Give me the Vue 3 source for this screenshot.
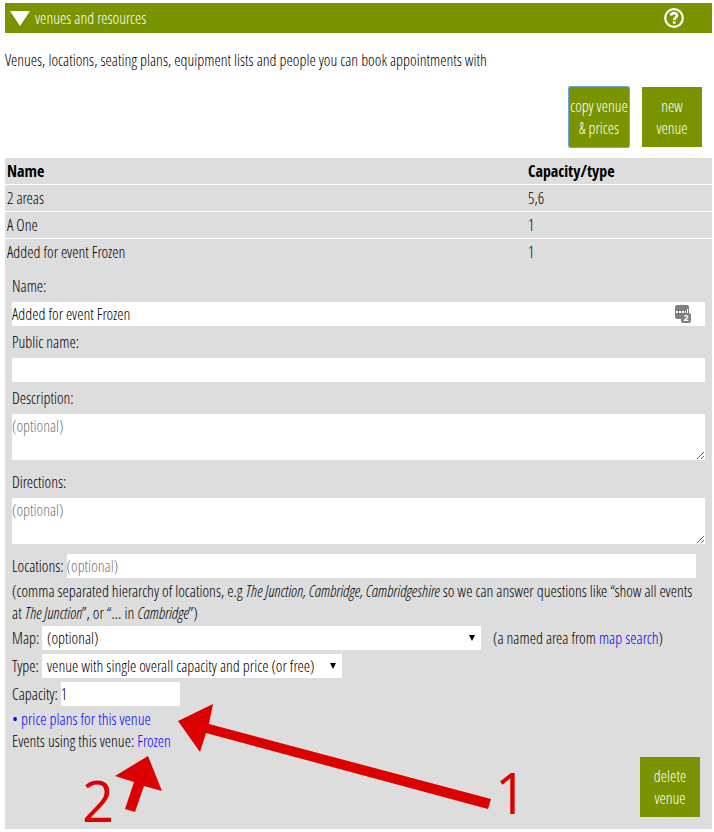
<template>
  <main class="page">
    <header class="bar">
      <button type="button" class="bar-toggle" @click="open = !open">
        <svg class="bar-arrow" viewBox="0 0 20 15"><path d="M0 0H20L10 15Z" fill="currentColor" /></svg>
        <span>venues and resources</span>
      </button>
      <button type="button" class="bar-help" aria-label="Help">
        <svg viewBox="0 0 20 20" fill="none" stroke="currentColor">
          <circle cx="10" cy="10" r="8.8" stroke-width="2.2" />
          <path d="M6.9 7.6C7.2 5.9 8.4 5.1 10 5.1C11.8 5.1 13 6.1 13 7.5C13 9.4 10.2 9.5 10.2 11.9" stroke-width="2.6" />
          <path d="M10.2 13.2V15.7" stroke-width="2.6" />
        </svg>
      </button>
    </header>

    <p class="intro">Venues, locations, seating plans, equipment lists and people you can book appointments with</p>

    <div class="actions">
      <button type="button" class="tile tile-focus">copy venue &amp; prices</button>
      <button type="button" class="tile">new<br />venue</button>
    </div>

    <section v-show="open" class="panel">
      <table class="venues">
        <thead>
          <tr>
            <th>Name</th>
            <th class="col-capacity">Capacity/type</th>
          </tr>
        </thead>
        <tbody>
          <tr v-for="venue in venues" :key="venue.name">
            <td>{{ venue.name }}</td>
            <td>{{ venue.capacity }}</td>
          </tr>
        </tbody>
      </table>

      <form class="form" @submit.prevent>
        <label class="label" for="name">Name:</label>
        <div class="with-icon">
          <input id="name" v-model="form.name" type="text" class="field" />
          <svg class="key-icon" viewBox="0 0 16 18">
            <rect x="0" y="0" width="14" height="14" rx="2" fill="#808080" />
            <rect x="6" y="8" width="10" height="10" rx="2" fill="#808080" />
            <path d="M1 6h2v2H1zM4 6h2v2H4zM7 6h2v2H7zM10 6h1v2h-1zM12 4h1v4h-1z" fill="#fff" />
            <text x="11" y="16" class="key-count">2</text>
          </svg>
        </div>

        <label class="label" for="public-name">Public name:</label>
        <input id="public-name" v-model="form.publicName" type="text" class="field" />

        <label class="label" for="description">Description:</label>
        <textarea id="description" v-model="form.description" class="field area" placeholder="(optional)"></textarea>

        <label class="label" for="directions">Directions:</label>
        <textarea id="directions" v-model="form.directions" class="field area" placeholder="(optional)"></textarea>

        <div class="line line-locations">
          <label for="locations">Locations:</label>
          <input id="locations" v-model="form.locations" type="text" class="field" placeholder="(optional)" />
        </div>
        <p class="hint">
          (comma separated hierarchy of locations, e.g <i>The Junction, Cambridge, Cambridgeshire</i> so we can answer
          questions like “show all events at <i>The Junction</i>”, or “... in <i>Cambridge</i>”)
        </p>

        <div class="line">
          <label class="label-short" for="map">Map:</label>
          <span class="select select-map">
            <select id="map" v-model="form.map" class="field">
              <option value="">(optional)</option>
            </select>
            <svg class="select-arrow" viewBox="0 0 6 6"><path d="M0 0H6L3 6Z" /></svg>
          </span>
          <span class="map-note">(a named area from <a href="#map-search">map search</a>)</span>
        </div>

        <div class="line">
          <label class="label-short" for="type">Type:</label>
          <span class="select select-type">
            <select id="type" v-model="form.type" class="field">
              <option value="single">venue with single overall capacity and price (or free)</option>
            </select>
            <svg class="select-arrow" viewBox="0 0 6 6"><path d="M0 0H6L3 6Z" /></svg>
          </span>
        </div>

        <div class="line line-capacity">
          <label for="capacity">Capacity:</label>
          <input id="capacity" v-model="form.capacity" type="text" class="field field-capacity" />
        </div>

        <div><a href="#price-plans">• price plans for this venue</a></div>
        <div>Events using this venue: <a href="#frozen">Frozen</a></div>

        <div class="form-footer">
          <button type="button" class="tile">delete venue</button>
        </div>

        <svg class="callouts" width="530" height="130" viewBox="0 0 530 130">
          <path d="M173 22L208 5L204 25L486 100L483 110L201 34L195 53Z" />
          <path d="M143 57L157 92L139 87L130 113L120 110L129 83L110 77Z" />
          <text x="77" y="123">2</text>
          <text x="490" y="115">1</text>
        </svg>
      </form>
    </section>
  </main>
</template>

<script setup>
import { reactive, ref } from 'vue'

const open = ref(true)

const venues = [
  { name: '2 areas', capacity: '5,6' },
  { name: 'A One', capacity: '1' },
  { name: 'Added for event Frozen', capacity: '1' }
]

const form = reactive({
  name: 'Added for event Frozen',
  publicName: '',
  description: '',
  directions: '',
  locations: '',
  map: '',
  type: 'single',
  capacity: '1'
})
</script>

<style>
body {
  margin: 0;
  background: #fff;
}
</style>

<style scoped>
.page {
  padding: 3px 2px 3px 5px;
  font-family: "Open Sans Condensed Light", "Liberation Sans Narrow", "Open Sans", sans-serif;
  font-size: 16px;
  font-weight: 300;
  line-height: 22px;
  color: #000;
}

button,
input,
select,
textarea {
  font: inherit;
  color: inherit;
}

a {
  color: #0000ff;
  text-decoration: none;
}

.bar {
  display: flex;
  align-items: center;
  justify-content: space-between;
  height: 30px;
  padding: 0 28px 0 5px;
  background: #7a9400;
  color: #fff;
}

.bar-toggle,
.bar-help {
  display: flex;
  align-items: center;
  gap: 5px;
  padding: 0;
  border: 0;
  background: none;
  color: #fff;
  cursor: pointer;
}

.bar-arrow {
  width: 20px;
  height: 15px;
}

.bar-help svg {
  width: 20px;
  height: 20px;
}

.intro {
  margin: 16px 0;
}

.actions {
  display: flex;
  justify-content: flex-end;
  gap: 13px;
  padding: 0 10px 11px 0;
}

.tile {
  width: 60px;
  height: 60px;
  padding: 0;
  border: 0;
  background: #7a9400;
  color: #fff;
  cursor: pointer;
}

.tile-focus {
  outline: 1px solid #6ea2e8;
  border-radius: 1px;
}

.panel {
  background: #ddd;
}

.venues {
  width: 100%;
  border-collapse: collapse;
}

.venues th,
.venues td {
  padding: 2px;
  text-align: left;
}

.venues th {
  font-family: "Open Sans Condensed", "Liberation Sans Narrow", sans-serif;
  font-weight: 700;
}

.venues tr {
  border-bottom: 1px solid #fff;
}

.venues tbody tr:last-child {
  border-bottom: 0;
}

.col-capacity {
  width: 182px;
}

.form {
  position: relative;
  padding: 5px 7px 12px;
}

.label {
  display: block;
  padding: 5px 0;
}

.field {
  display: block;
  box-sizing: border-box;
  width: 100%;
  height: 24px;
  margin: 0;
  padding: 0;
  border: 0;
  border-radius: 0;
  background: #fff;
}

.field::placeholder {
  color: #757575;
}

.area {
  height: 46px;
  margin-bottom: 6px;
  padding: 1px 0;
  resize: vertical;
}

.with-icon {
  position: relative;
}

.key-icon {
  position: absolute;
  top: 3px;
  right: 14px;
  width: 16px;
  height: 18px;
}

.key-count {
  font: 700 9px "Open Sans", sans-serif;
  fill: #fff;
  text-anchor: middle;
}

.line {
  display: flex;
  align-items: center;
  gap: 4px;
  margin-bottom: 4px;
}

.line-locations {
  gap: 3px;
  margin: 10px 9px 2px 0;
}

.line-locations .field {
  flex: 1;
}

.line-capacity {
  gap: 3px;
  margin-bottom: 2px;
}

.hint {
  margin: 0 9px 2px 0;
}

.label-short {
  width: 26px;
}

.select {
  position: relative;
}

.select select {
  padding: 0 20px 0 5px;
  appearance: none;
}

.select-map {
  flex: 0 1 439px;
}

.select-type {
  flex: 0 1 300px;
}

.select-arrow {
  position: absolute;
  top: 9px;
  right: 6px;
  width: 6px;
  height: 6px;
  pointer-events: none;
}

.map-note {
  margin-left: 8px;
}

.field-capacity {
  width: 119px;
}

.form-footer {
  display: flex;
  justify-content: flex-end;
  padding: 5px 5px 0 0;
}

.callouts {
  position: absolute;
  bottom: 0;
  left: 0;
  fill: #dd0000;
  pointer-events: none;
}

.callouts text {
  font: 400 56px "Open Sans", sans-serif;
}
</style>
